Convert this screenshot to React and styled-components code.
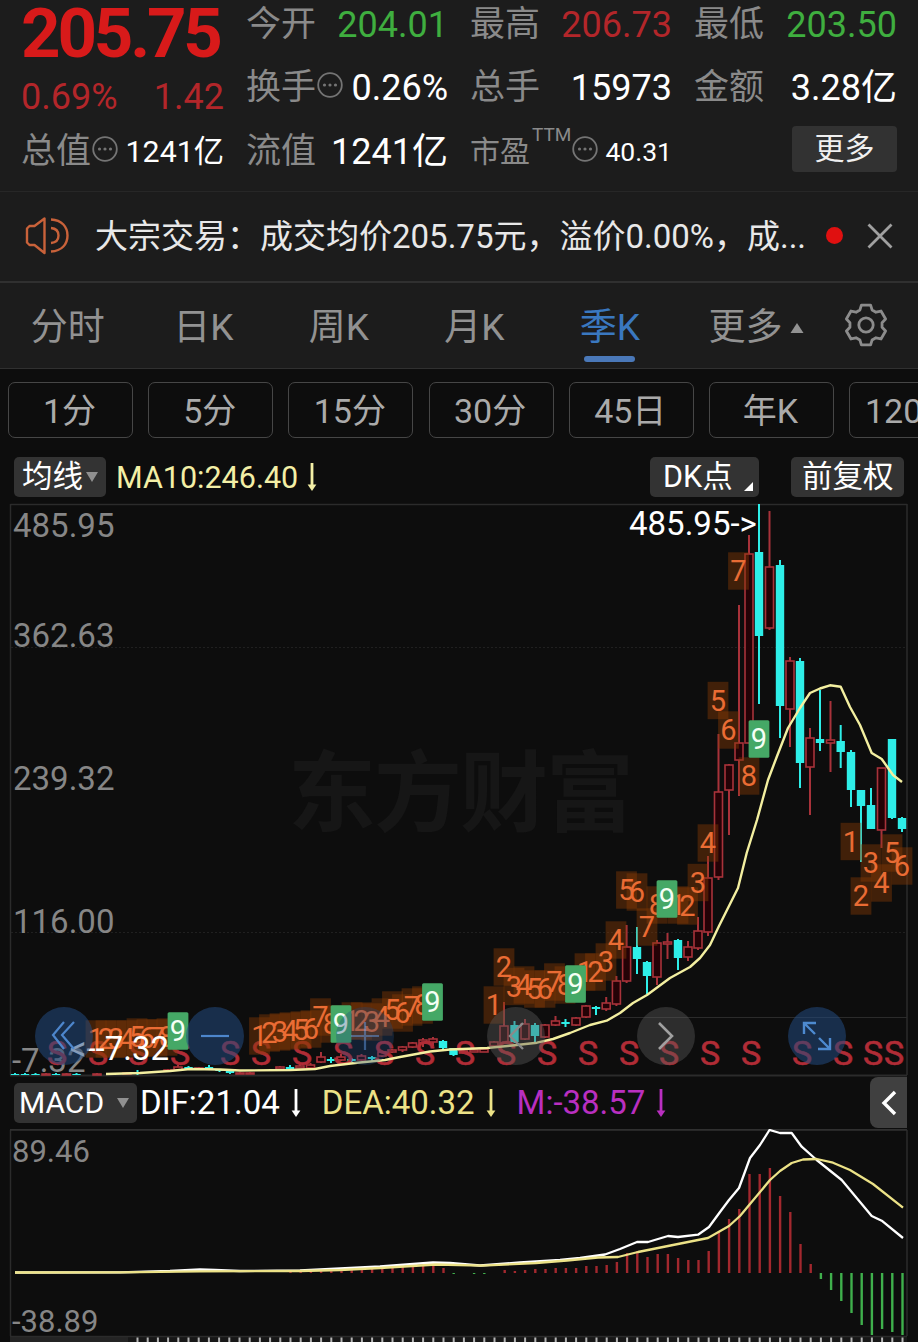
import styled, { createGlobalStyle } from "styled-components";

const RED = "#a8323a";
const CYAN = "#2eeee8";

const quotes = [
  [
    { label: "今开", value: "204.01", color: "#3fae3f" },
    { label: "换手", value: "0.26%", info: true },
    { label: "流值", value: "1241亿" },
  ],
  [
    { label: "最高", value: "206.73", color: "#b3262a" },
    { label: "总手", value: "15973" },
    { label: "市盈", sup: "TTM", value: "40.31", info: true, small: 26.5, labelSize: 30 },
  ],
  [
    { label: "最低", value: "203.50", color: "#3fae3f" },
    { label: "金额", value: "3.28亿" },
  ],
];

const tabs = ["分时", "日K", "周K", "月K", "季K"];
const periods = ["1分", "5分", "15分", "30分", "45日", "年K", "120分"];

// x, high, body top, body bottom, low, rising
const candles = [
  [902, 817, 818, 829, 832, 0],
  [892, 739, 739, 818, 819, 0],
  [881.5, 768, 768, 830, 848, 1],
  [871, 788, 805, 829, 829, 0],
  [861, 790, 790, 806, 862, 0],
  [851, 750, 752, 790, 807, 0],
  [840.7, 725, 741, 752, 768, 0],
  [830.5, 701, 740, 743, 772, 1],
  [820, 690, 739, 743, 751, 0],
  [810, 728, 738, 767, 815, 1],
  [800, 658, 661, 763, 788, 0],
  [790, 657, 661, 709, 747, 1],
  [780, 560, 565, 706, 738, 0],
  [769.5, 511, 567, 628, 630, 1],
  [759, 504, 552, 636, 704, 0],
  [749, 535, 554, 743, 743, 1],
  [739, 605, 743, 760, 796, 1],
  [729, 764, 765, 790, 835, 1],
  [718.5, 734, 792, 877, 880, 1],
  [708, 856, 878, 932, 936, 1],
  [698, 917, 931, 948, 950, 1],
  [688, 941, 947, 957, 961, 1],
  [678, 939, 940, 958, 970, 0],
  [667.5, 933, 942, 944, 959, 1],
  [657, 940, 943, 977, 985, 1],
  [647, 961, 962, 976, 994, 0],
  [637, 927, 947, 959, 974, 0],
  [626.6, 925, 947, 981, 983, 1],
  [616.4, 976, 981, 1004, 1006, 1],
  [606.2, 997, 1003, 1009, 1011, 1],
  [596, 1006, 1007, 1009, 1015, 0],
  [586, 1005, 1006, 1017, 1018, 1],
  [576, 1017, 1018, 1025, 1026, 1],
  [565.5, 1019, 1022, 1024, 1027, 0],
  [555.5, 1016, 1021, 1025, 1026, 1],
  [545, 1024, 1025, 1037, 1038, 1],
  [535, 1023, 1025, 1036, 1042, 0],
  [525, 1019, 1024, 1039, 1040, 1],
  [514.5, 1021, 1025, 1042, 1043, 0],
  [504, 1002, 1026, 1043, 1044, 1],
  [494, 1041, 1042, 1046, 1047, 1],
  [484, 1048, 1049, 1052, 1052, 1],
  [474, 1048, 1050, 1052, 1052, 1],
  [463.5, 1049, 1051, 1053, 1054, 1],
  [453.5, 1048, 1048, 1055, 1056, 0],
  [443, 1040, 1041, 1048, 1049, 0],
  [433, 1037, 1039, 1042, 1046, 1],
  [423, 1038, 1040, 1043, 1047, 1],
  [412.5, 1042, 1043, 1047, 1048, 1],
  [402.5, 1046, 1047, 1050, 1052, 1],
  [392, 1049, 1050, 1052, 1053, 1],
  [382, 1051, 1052, 1056, 1057, 1],
  [372, 1056, 1057, 1059, 1062, 0],
  [361.5, 1054, 1056, 1060, 1061, 1],
  [351.5, 1058, 1059, 1061, 1062, 0],
  [341, 1054, 1057, 1060, 1061, 1],
  [331, 1057, 1059, 1061, 1063, 0],
  [321, 1052, 1057, 1062, 1063, 1],
  [310.5, 1063, 1065, 1068, 1068, 1],
  [300, 1064, 1066, 1068, 1068, 1],
  [290, 1065, 1067, 1069, 1070, 0],
  [280, 1066, 1067, 1069, 1069, 1],
  [250, 1072, 1073, 1074, 1074, 1],
  [240, 1072, 1073, 1074, 1074, 1],
  [230, 1070, 1071, 1073, 1074, 0],
  [219.5, 1069, 1070, 1071, 1072, 0],
  [209, 1065, 1067, 1070, 1070, 0],
  [199, 1067, 1068, 1069, 1069, 1],
  [188.5, 1066, 1067, 1069, 1069, 0],
  [178, 1065, 1067, 1070, 1070, 1],
  [168, 1069, 1070, 1071, 1071, 1],
  [137.5, 1070, 1072, 1074, 1075, 0],
  [127, 1072, 1073, 1074, 1074, 1],
  [97, 1073, 1074, 1075, 1075, 1],
  [76.5, 1073, 1074, 1075, 1075, 0],
  [66.5, 1073, 1074, 1075, 1075, 1],
  [56, 1073, 1074, 1075, 1075, 0],
  [46, 1073, 1074, 1075, 1075, 1],
  [35.5, 1073, 1074, 1075, 1075, 0],
  [25, 1073, 1074, 1075, 1075, 0],
  [15, 1073, 1074, 1075, 1075, 0],
];

const maLine =
  "106,1074 140,1073 170,1071 190,1069 220,1069.5 240,1070.5 290,1070 315,1069 330,1066 355,1063 385,1060 400,1057 430,1051.5 450,1049.5 487,1048 510,1045.7 537,1042.7 553,1039 570,1033 590,1025 606.7,1020.7 620,1013 633,1003 647,995 670,978 690,967 700,958 710,945 719,926 738,888 746.7,853 757,820 768,780 776.7,757 788,728 800,708 810,693 820,688.5 830,685.3 840.7,686.7 850,707 860,725 871.7,753 881.7,759 893,775 902,782";

// digit, centre x, centre y
const marks = [
  [1, 96, 1039], [2, 106, 1039], [3, 116, 1039], [4, 127, 1039], [5, 137, 1037],
  [6, 147, 1038], [7, 157, 1038], [8, 167, 1037], [9, 178, 1031],
  [1, 259.5, 1036], [2, 269.5, 1033], [3, 280, 1032], [4, 290, 1031], [5, 301, 1030],
  [6, 311, 1029], [7, 320.5, 1017], [8, 331, 1024], [9, 341, 1024],
  [1, 352, 1021], [2, 361.5, 1021], [3, 372, 1022], [4, 382, 1017], [5, 392.5, 1010],
  [6, 402.5, 1013], [7, 412, 1007], [8, 422.5, 1005], [9, 432.5, 1002],
  [1, 494, 1005], [2, 504, 967], [3, 514, 986.5], [4, 524, 985], [5, 534.5, 989],
  [6, 545, 989], [7, 554.5, 982], [8, 565, 985], [9, 575.5, 984],
  [1, 585, 972], [2, 595.5, 972], [3, 606, 962], [4, 616, 940], [5, 626.5, 890],
  [6, 637, 892], [7, 647, 927], [8, 657, 905], [9, 667, 899],
  [1, 678, 905], [2, 687.5, 906], [3, 698, 882.5], [4, 708, 843], [5, 718, 700.5],
  [6, 728.5, 730], [7, 738.5, 571], [8, 749, 776], [9, 759, 739],
  [1, 851, 841.5], [2, 861, 896], [3, 871, 863], [4, 881.5, 883], [5, 892, 853],
  [6, 902, 866],
];

const sells = [
  57, 98, 138, 180, 230, 261, 302, 343, 384, 425, 465, 506, 547, 588, 629, 669,
  710, 751, 802, 843, 873, 894,
];

// histogram ends, newest first, one bar each 10.2px
const bars = [
  1335, 1332, 1329, 1335, 1325, 1313, 1301, 1290, 1279, 1264, 1244, 1212, 1196,
  1168, 1174, 1174, 1209, 1219, 1232, 1251, 1260, 1260, 1258, 1254, 1254, 1257,
  1251, 1253, 1262, 1265, 1266, 1266, 1268, 1268, 1268, 1269, 1269, 1270, 1271,
  1270, 1273, 1274, 1274, 1273, 1274, 1268, 1266, 1265, 1266, 1266, 1267, 1268,
  1268, 1268, 1269, 1269, 1269, 1270, 1271, 1271, 1271,
];

const difLine =
  "15,1272.5 120,1272.3 170,1271 200,1269.5 215,1270 240,1271 300,1270.5 340,1268.5 380,1266.5 433,1262.5 450,1263 480,1265.5 520,1262.5 560,1260 580,1258 605,1254.5 620,1249 637,1242 648,1242 668,1236 678,1237 698,1234.7 709,1227 720,1212 729,1200 739,1188 750,1158 760,1145 769.5,1130 780,1133 791.7,1133 801.7,1146.7 816.7,1160 841.7,1180 856.7,1198 871.7,1216 881.7,1220.7 903,1238";
const deaLine =
  "15,1272.5 120,1272.3 200,1271.3 300,1271 340,1270 380,1268 436,1264.5 482,1265.7 536,1263 567,1260.5 598,1257.5 618,1257 638,1252 668,1246 708,1238 729,1226 740,1216 750,1204 770,1180 780,1171 791.7,1163 803,1159.5 816.7,1159 833,1162.7 850,1170 873,1184 903,1207.7";

const gearPoints = Array.from({ length: 6 }).flatMap((_, i) =>
  [[-22, 16.2], [-13, 20.5], [13, 20.5], [22, 16.2]].map(([offset, r]) => {
    const a = ((i * 60 - 90 + offset) * Math.PI) / 180;
    return `${23 + r * Math.cos(a)},${23 + r * Math.sin(a)}`;
  })
).join(" ");

function InfoIcon({ $lift }) {
  return (
    <InfoSvg viewBox="0 0 26 26" $lift={$lift}>
      <circle cx="13" cy="13" r="11.8" fill="none" stroke="#747474" strokeWidth="1.8" />
      <circle cx="7.5" cy="13" r="1.6" fill="#747474" />
      <circle cx="13" cy="13" r="1.6" fill="#747474" />
      <circle cx="18.5" cy="13" r="1.6" fill="#747474" />
    </InfoSvg>
  );
}

function DownArrow({ color }) {
  return (
    <svg width="12" height="30" viewBox="0 0 12 30">
      <path d="M6 1V24" stroke={color} strokeWidth="2.8" />
      <path d="M1.6 22.5H10.4L6 29Z" fill={color} />
    </svg>
  );
}

function KChart() {
  return (
    <Plot height="577" viewBox="0 501 918 577">
      <Watermark x="288" y="824" textLength="346">东方财富</Watermark>
      <g stroke="#2b2b2b">
        <path d="M10.5 504.5H907M10.5 504V1075M907 504V1075" strokeWidth="1.5" fill="none" />
        <path d="M11 647.5H907M11 932.5H907" strokeDasharray="2 2" stroke="#202020" />
        <path d="M620 1017.5H907" />
        <path d="M10 1075.5H907" strokeWidth="2" />
      </g>
      <AxisText x="13" y="536.5">485.95</AxisText>
      <AxisText x="13" y="647">362.63</AxisText>
      <AxisText x="13" y="790">239.32</AxisText>
      <AxisText x="13" y="933">116.00</AxisText>
      <AxisText x="12" y="1072">-7.32</AxisText>

      {candles.map(([x, high, top, bottom, low, up]) => (
        <g key={x} stroke={up ? RED : CYAN} strokeWidth="2">
          <path d={`M${x} ${high}V${top}M${x} ${bottom}V${low}`} />
          {up ? (
            <rect x={x - 4} y={top} width="8" height={bottom - top} fill="#240206" strokeWidth="1.6" />
          ) : (
            <rect x={x - 4.2} y={top} width="8.4" height={bottom - top} fill={CYAN} stroke="none" />
          )}
        </g>
      ))}

      {sells.map((x) => (
        <SellText key={x} x={x} y="1065">S</SellText>
      ))}

      {marks.map(([n, x, y]) =>
        n === 9 ? null : (
          <rect key={x} x={x - 10.4} y={y - 18.7} width="20.8" height="37.4" fill="#8a3c04" opacity="0.42" />
        )
      )}
      {marks.map(([n, x, y]) =>
        n === 9 ? null : <MarkText key={x} x={x} y={y + 10.2}>{n}</MarkText>
      )}
      {marks.map(([n, x, y]) =>
        n === 9 ? (
          <g key={x}>
            <rect x={x - 10.4} y={y - 18.7} width="20.8" height="37.4" rx="1.5" fill="#45a866" />
            <MarkText x={x} y={y + 10} $nine>9</MarkText>
          </g>
        ) : null
      )}

      <polyline points={maLine} fill="none" stroke="#f3efa0" strokeWidth="2.4" strokeLinejoin="round" />
      <ExtremeText x="629" y="535">{"485.95->"}</ExtremeText>
      <ExtremeText x="169" y="1060" textAnchor="end">{"<--7.32"}</ExtremeText>
    </Plot>
  );
}

function MacdChart() {
  return (
    <Plot height="213" viewBox="0 1129 918 213">
      <rect x="10" y="1337" width="897" height="5" fill="#171717" />
      <rect x="10" y="1337" width="118" height="5" fill="#242424" />
      <path d="M10.5 1130V1336M907 1130V1336M10 1336.5H907" stroke="#2b2b2b" strokeWidth="1.5" />
      <path d="M10 1129.8H907" stroke="#303030" strokeWidth="2" />
      <AxisText x="12" y="1162" $small>89.46</AxisText>
      <AxisText x="12" y="1332" $small>-38.89</AxisText>
      {bars.map((y, i) => (
        <path
          key={i}
          d={`M${902.5 - i * 10.2} 1273V${y}`}
          stroke={y > 1273 ? "#3fb04c" : "#a3282e"}
          strokeWidth="2.4"
        />
      ))}
      <polyline points={difLine} fill="none" stroke="#ffffff" strokeWidth="2.3" strokeLinejoin="round" />
      <polyline points={deaLine} fill="none" stroke="#ece287" strokeWidth="2.3" strokeLinejoin="round" />
      {Array.from({ length: 76 }).map((_, i) => (
        <path key={i} d={`M${902.5 - i * 10.2} 1337.5V1342`} stroke="#b5b5b5" strokeWidth="2" />
      ))}
    </Plot>
  );
}

export default function App() {
  return (
    <Page>
      <GlobalStyle />
      <Summary>
        <FirstColumn>
          <Price>205.75</Price>
          <Change>
            <span>0.69%</span>
            <span>1.42</span>
          </Change>
          <Quote $height={50}>
            <Label>总值</Label>
            <InfoIcon $lift={6} />
            <Value $size={30.3}>1241亿</Value>
          </Quote>
        </FirstColumn>
        {quotes.map((column, i) => (
          <Column key={i}>
            {column.map((q, row) => (
              <Quote key={q.label} $height={[50, 76, 52][row]}>
                <Label $size={q.labelSize}>{q.label}</Label>
                {q.sup && <Sup>{q.sup}</Sup>}
                {q.info && <InfoIcon $lift={7} />}
                <Value $size={q.small} $color={q.color}>{q.value}</Value>
              </Quote>
            ))}
            {i === 2 && <MoreButton>更多</MoreButton>}
          </Column>
        ))}
      </Summary>

      <Notice>
        <svg width="44" height="40" viewBox="0 0 44 40" fill="none" stroke="#c9623a" strokeWidth="2.4">
          <path d="M19.5 2.5V37L9.500 29H4.500L2 26.500V12.500L4.500 10H9.500L19.500 2.500Z" strokeLinejoin="round" />
          <path d="M26 3.500C37 4 42.500 11 42.500 19.500S37 35 26 35.500" />
          <path d="M26 12C31 12.500 33.500 15.500 33.500 19.500S31 26.500 26 27" />
        </svg>
        <NoticeText>大宗交易：成交均价205.75元，溢价0.00%，成...</NoticeText>
        <Dot />
        <svg width="26" height="26" viewBox="0 0 26 26">
          <path d="M1.500 1.500L24.500 24.500M24.500 1.500L1.500 24.500" stroke="#a0a0a0" strokeWidth="2.8" />
        </svg>
      </Notice>

      <Tabs>
        {tabs.map((tab) => (
          <Tab key={tab} $active={tab === "季K"}>{tab}</Tab>
        ))}
        <Tab $wide>
          更多
          <svg width="14" height="12" viewBox="0 0 14 12">
            <path d="M7 1L13.500 11H0.500Z" fill="#929292" />
          </svg>
        </Tab>
        <svg width="46" height="46" viewBox="0 0 46 46" fill="none" stroke="#8c8c8c" strokeWidth="2.8">
          <polygon points={gearPoints} strokeLinejoin="round" />
          <circle cx="23" cy="23" r="7.200" />
        </svg>
      </Tabs>

      <Periods>
        {periods.map((p) => (
          <Period key={p}>{p}</Period>
        ))}
      </Periods>

      <IndicatorBar>
        <Pill $width={92} $left={8}>
          均线
          <Caret $gap={3} />
        </Pill>
        <MaValue>MA10:246.40</MaValue>
        <DownArrow color="#f3efa6" />
        <Spacer />
        <Pill $width={109} $left={13}>
          DK点
          <Corner viewBox="0 0 9 9">
            <path d="M9 0V9H0Z" fill="#fff" />
          </Corner>
        </Pill>
        <Gap $width={32} />
        <Pill $width={113} $left={11}>前复权</Pill>
      </IndicatorBar>

      <ChartArea>
        <KChart />
        <ToolLayer>
          <Tool $blue>
            <svg width="26" height="32" viewBox="0 0 26 32" fill="none" stroke="#4d86cc" strokeWidth="2.2">
              <path d="M13 2L2 15L13 29M23 2L11 15L23 29" />
            </svg>
          </Tool>
          <Tool $blue>
            <svg width="30" height="4" viewBox="0 0 30 4">
              <path d="M1 2H29" stroke="#4d86cc" strokeWidth="2.200" />
            </svg>
          </Tool>
          <Tool $blue $faint>
            <svg width="28" height="28" viewBox="0 0 28 28">
              <path d="M0 14H28M14 0V28" stroke="#5590dd" strokeWidth="2.200" />
            </svg>
          </Tool>
          <Tool>
            <svg width="16" height="28" viewBox="0 0 16 28" fill="none" stroke="#8a8a8a" strokeWidth="2.400">
              <path d="M15 1L2 14L15 27" />
            </svg>
          </Tool>
          <Tool>
            <svg width="16" height="28" viewBox="0 0 16 28" fill="none" stroke="#a0a0a0" strokeWidth="2.600">
              <path d="M1 1L14 14L1 27" />
            </svg>
          </Tool>
          <Tool $blue>
            <svg width="30" height="30" viewBox="0 0 30 30" fill="none" stroke="#4d8ad0" strokeWidth="2.400">
              <path d="M2 13V2H14M2 2L13 13M28 17V28H16M28 28L17 17" />
            </svg>
          </Tool>
        </ToolLayer>
      </ChartArea>

      <MacdBar>
        <MacdPill>
          MACD
          <Caret $gap={13} />
        </MacdPill>
        <MacdValue $left={3}>DIF:21.04</MacdValue>
        <DownArrow color="#ffffff" />
        <MacdValue $left={20} $color="#ece287">DEA:40.32</MacdValue>
        <DownArrow color="#ece287" />
        <MacdValue $left={20} $color="#b92fc0">M:-38.57</MacdValue>
        <DownArrow color="#b92fc0" />
        <Spacer />
        <Collapse>
          <svg width="16" height="26" viewBox="0 0 16 26" fill="none" stroke="#fff" strokeWidth="3.400">
            <path d="M14 2L3 13L14 24" />
          </svg>
        </Collapse>
      </MacdBar>
      <MacdChart />
    </Page>
  );
}

const GlobalStyle = createGlobalStyle`
  * {
    box-sizing: border-box;
  }
  body {
    margin: 0;
    background: #0d0d0d;
    overflow: hidden;
  }
  svg {
    flex-shrink: 0;
  }
`;

const Page = styled.div`
  width: 918px;
  height: 1342px;
  overflow: hidden;
  background: #0d0d0d;
  color: #fff;
  font-family: Roboto, "Noto Sans CJK SC", sans-serif;
  white-space: nowrap;
`;

const Summary = styled.header`
  display: grid;
  grid-template-columns: 202px 202px 202px 203px;
  column-gap: 22px;
  height: 191px;
  padding-left: 22px;
  background: #1c1c1c;
`;

const Column = styled.div`
  display: flex;
  flex-direction: column;
`;

const FirstColumn = styled(Column)`
  margin-left: -1px;
  width: 203px;
`;

const Price = styled.div`
  height: 67px;
  line-height: 68px;
  font-size: 69px;
  font-weight: 700;
  letter-spacing: -3.2px;
  color: #d81a1a;
`;

const Change = styled.div`
  display: flex;
  justify-content: space-between;
  height: 60px;
  line-height: 61px;
  font-size: 36px;
  color: #b3262a;
`;

const Quote = styled.div`
  display: flex;
  align-items: center;
  height: ${(props) => props.$height}px;
  line-height: ${(props) => props.$height}px;
`;

const Label = styled.span`
  font-size: ${(props) => props.$size || 35}px;
  color: #8a8a8a;
`;

const Sup = styled.span`
  align-self: flex-start;
  margin-left: 2px;
  line-height: 18px;
  font-size: 19px;
  color: #8a8a8a;
`;

const InfoSvg = styled.svg`
  width: 26px;
  height: 26px;
  margin: 0 0 ${(props) => props.$lift}px 1px;
`;

const Value = styled.span`
  margin-left: auto;
  font-size: ${(props) => props.$size || 36}px;
  color: ${(props) => props.$color || "#fff"};
`;

const MoreButton = styled.button`
  width: 105px;
  height: 46px;
  margin: 0 0 0 auto;
  padding: 0;
  border: 0;
  border-radius: 4px;
  background: #323232;
  color: #f0f0f0;
  font-family: inherit;
  font-size: 30px;
  line-height: 46px;
`;

const Notice = styled.div`
  display: flex;
  align-items: center;
  height: 90px;
  padding: 0 0 2px 25px;
  background: #1c1c1c;
  border-top: 1px solid #272727;
`;

const NoticeText = styled.span`
  width: 711px;
  margin-left: 26px;
  padding-top: 2px;
  font-size: 33px;
  line-height: 86px;
  color: #e8e8e8;
`;

const Dot = styled.i`
  width: 17px;
  height: 17px;
  margin: 0 24px 0 20px;
  border-radius: 50%;
  background: #e01010;
`;

const Tabs = styled.nav`
  display: flex;
  align-items: center;
  height: 88px;
  background: #1c1c1c;
  border-top: 2px solid #303030;
  border-bottom: 1px solid #303030;
  & > svg {
    margin: 0 0 2px 8px;
  }
`;

const Tab = styled.div`
  position: relative;
  display: flex;
  align-items: center;
  justify-content: center;
  gap: 7px;
  width: ${(props) => (props.$wide ? 157 : 135.5)}px;
  height: 85px;
  line-height: 89px;
  padding-top: 4px;
  font-size: 37px;
  color: ${(props) => (props.$active ? "#3a78c0" : "#929292")};
  &::after {
    content: "";
    display: ${(props) => (props.$active ? "block" : "none")};
    position: absolute;
    left: 42px;
    bottom: 6px;
    width: 51px;
    height: 6px;
    border-radius: 3px;
    background: #4a78b8;
  }
`;

const Periods = styled.div`
  display: flex;
  gap: 15.200px;
  padding: 13px 0 0 8px;
  overflow: hidden;
`;

const Period = styled.div`
  flex: 0 0 125px;
  height: 56px;
  line-height: 57px;
  padding-right: 2px;
  border: 1.500px solid #464646;
  border-radius: 7px;
  text-align: center;
  font-size: 34px;
  color: #aaa;
`;

const IndicatorBar = styled.div`
  display: flex;
  align-items: center;
  height: 63px;
  padding: 19px 14px 4px 14px;
`;

const Pill = styled.div`
  display: flex;
  align-items: center;
  width: ${(props) => props.$width}px;
  height: 40px;
  padding-left: ${(props) => props.$left}px;
  border-radius: 5px;
  background: #333;
  font-size: 30.500px;
  line-height: 42px;
`;

const Caret = styled.i`
  margin-left: ${(props) => props.$gap}px;
  border: 6.500px solid transparent;
  border-top: 10px solid #909090;
  border-bottom: 0;
`;

const Corner = styled.svg`
  align-self: flex-end;
  width: 9px;
  height: 9px;
  margin: 0 0 6px 11px;
`;

const MaValue = styled.span`
  margin: 0 8px 0 10px;
  font-size: 30.500px;
  color: #f3efa6;
`;

const Spacer = styled.span`
  flex: 1;
`;

const Gap = styled.span`
  width: ${(props) => props.$width}px;
`;

const ChartArea = styled.section`
  position: relative;
  height: 577px;
`;

const Plot = styled.svg`
  display: block;
  width: 918px;
  font-family: Roboto, "Noto Sans CJK SC", sans-serif;
`;

const Watermark = styled.text`
  font-size: 88px;
  font-weight: 700;
  fill: #161616;
`;

const AxisText = styled.text`
  font-size: ${(props) => (props.$small ? 31 : 33)}px;
  fill: #868686;
`;

const ExtremeText = styled.text`
  font-size: 33px;
  fill: #fff;
`;

const SellText = styled.text`
  font-size: 34px;
  text-anchor: middle;
  fill: #b02c36;
  stroke: #b02c36;
  stroke-width: 0.600px;
`;

const MarkText = styled.text`
  font-size: 29px;
  text-anchor: middle;
  fill: ${(props) => (props.$nine ? "#f4fff4" : "#ea6c34")};
`;

/* floats over the bottom of the candles */
const ToolLayer = styled.div`
  position: absolute;
  left: 35px;
  top: 506px;
  display: flex;
  gap: 92.500px;
`;

const Tool = styled.div`
  display: flex;
  align-items: center;
  justify-content: center;
  width: 58px;
  height: 58px;
  border-radius: 50%;
  background: ${(props) => (props.$blue ? "rgba(34, 74, 128, 0.55)" : "rgba(90, 90, 90, 0.42)")};
  opacity: ${(props) => (props.$faint ? 0.6 : 1)};
`;

const MacdBar = styled.div`
  display: flex;
  align-items: center;
  height: 51px;
  padding: 0 11px 2px 14px;
`;

const MacdPill = styled(Pill)`
  width: 123px;
  padding-left: 5px;
  font-size: 30px;
  line-height: 40px;
`;

const MacdValue = styled.span`
  margin: 0 10px 0 ${(props) => props.$left}px;
  font-size: 33px;
  line-height: 48px;
  color: ${(props) => props.$color || "#fff"};
`;

const Collapse = styled.div`
  display: flex;
  align-items: center;
  justify-content: center;
  width: 37px;
  height: 51px;
  border-radius: 8px 0 0 8px;
  background: #404040;
`;
